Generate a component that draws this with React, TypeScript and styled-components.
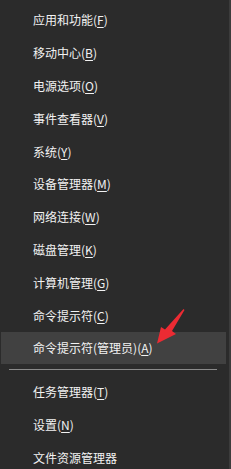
import styled, { createGlobalStyle } from "styled-components";

const Global = createGlobalStyle`
  html, body {
    margin: 0;
    padding: 0;
    background: #2b2b2b;
  }
`;

const Menu = styled.div`
  position: relative;
  width: 231px;
  height: 469px;
  box-sizing: border-box;
  background: #2b2b2b;
  border-right: 2px solid #3c3c3c;
  padding: 3.6px 3px 0 1px;
  display: flex;
  flex-direction: column;
  overflow: hidden;
  font-family: "Noto Sans CJK SC", "Noto Sans", sans-serif;
`;

const Item = styled.div<{ $active?: boolean }>`
  height: 32.8px;
  flex-shrink: 0;
  display: flex;
  align-items: center;
  padding-left: 32px;
  color: #f2f2f2;
  font-size: 12px;
  background: ${(p) => (p.$active ? "#414141" : "transparent")};
  u {
    text-decoration-thickness: 1px;
    text-underline-offset: 2px;
  }
`;

const Separator = styled.div`
  flex-shrink: 0;
  height: 11px;
  display: flex;
  align-items: center;
  padding: 0 9px 0 8px;
  &::before {
    content: "";
    flex: 1;
    height: 1px;
    background: #8a8a8a;
  }
`;

const Arrow = styled.svg`
  position: absolute;
  left: 150px;
  top: 300px;
`;

type Entry = { label: string; key?: string; active?: boolean };

const top: Entry[] = [
  { label: "应用和功能", key: "F" },
  { label: "移动中心", key: "B" },
  { label: "电源选项", key: "O" },
  { label: "事件查看器", key: "V" },
  { label: "系统", key: "Y" },
  { label: "设备管理器", key: "M" },
  { label: "网络连接", key: "W" },
  { label: "磁盘管理", key: "K" },
  { label: "计算机管理", key: "G" },
  { label: "命令提示符", key: "C" },
  { label: "命令提示符(管理员)", key: "A", active: true },
];

const bottom: Entry[] = [
  { label: "任务管理器", key: "T" },
  { label: "设置", key: "N" },
  { label: "文件资源管理器" },
];

function Row({ e }: { e: Entry }) {
  return (
    <Item $active={e.active}>
      {e.label}
      {e.key && (
        <>
          (<u>{e.key}</u>)
        </>
      )}
    </Item>
  );
}

export default function App() {
  return (
    <>
      <Global />
      <Menu>
        {top.map((e) => (
          <Row key={e.label} e={e} />
        ))}
        <Separator />
        {bottom.map((e) => (
          <Row key={e.label} e={e} />
        ))}
        <Arrow width="40" height="48" viewBox="0 0 40 48">
          <path d="M33.5 9 L34.5 10 L22 31 L26 34 L7 43.5 L11 27 L15 29.5 Z" fill="#ec2b33" />
        </Arrow>
      </Menu>
    </>
  );
}
